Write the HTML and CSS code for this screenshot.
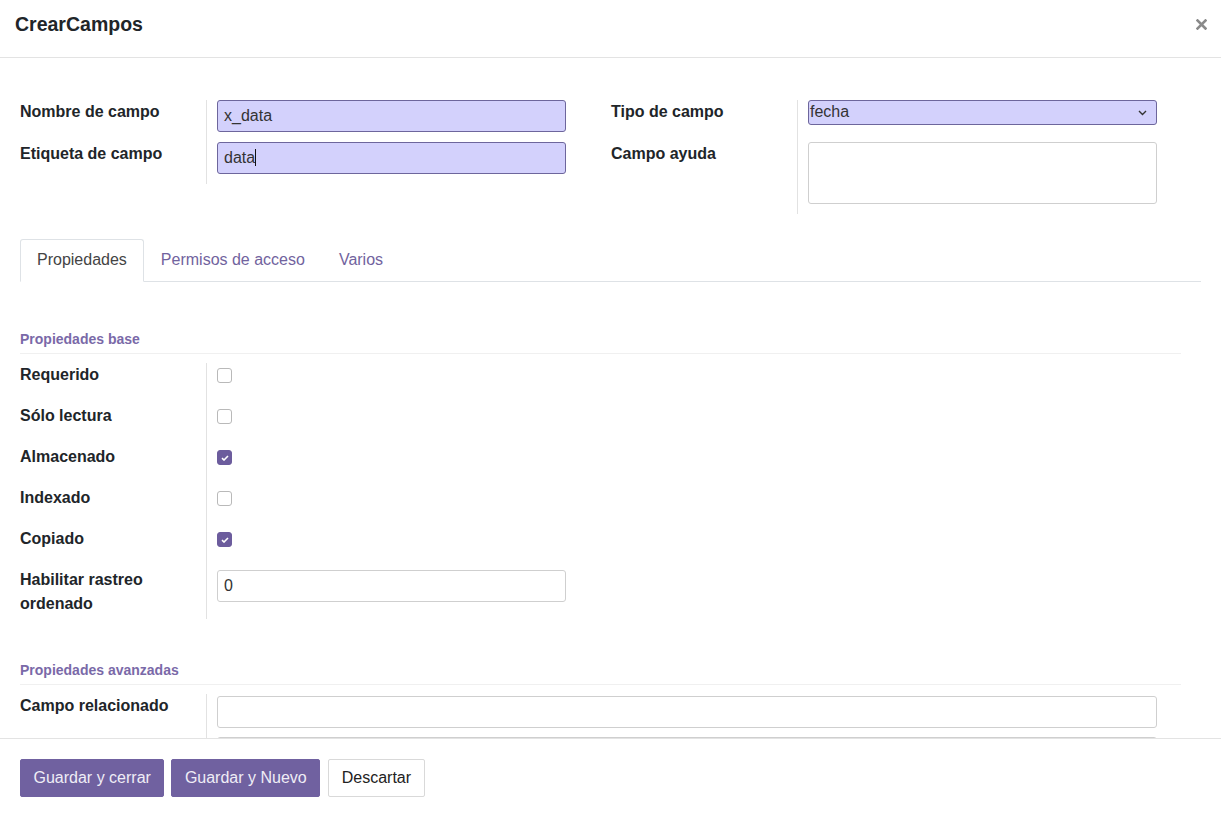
FILE: index.html
```html
<!DOCTYPE html>
<html lang="es">
<head>
<meta charset="utf-8">
<title>CrearCampos</title>
<link rel="stylesheet" href="styles.css">
</head>
<body>
<div class="modal">
  <header class="modal-header">
    <h4 class="modal-title">CrearCampos</h4>
    <button class="close" aria-label="Cerrar">
      <svg width="11" height="11" viewBox="0 0 11 11"><path d="M1.5 1.5 L9.5 9.5 M9.5 1.5 L1.5 9.5" stroke="#8a8a8a" stroke-width="2.6" stroke-linecap="square"/></svg>
    </button>
  </header>

  <main class="modal-body">
    <div class="top-groups">
      <div class="group">
        <div class="lbl">Nombre de campo</div>
        <div class="val"><div class="input hl">x_data</div></div>
        <div class="lbl">Etiqueta de campo</div>
        <div class="val"><div class="input hl">data<span class="caret"></span></div></div>
      </div>
      <div class="group">
        <div class="lbl">Tipo de campo</div>
        <div class="val"><div class="select hl"><span>fecha</span>
          <svg width="9" height="6" viewBox="0 0 9 6"><path d="M1 1 L4.5 4.5 L8 1" fill="none" stroke="#333" stroke-width="1.4"/></svg></div></div>
        <div class="lbl">Campo ayuda</div>
        <div class="val"><div class="textarea"></div></div>
      </div>
    </div>

    <nav class="tabs">
      <div class="tab active">Propiedades</div>
      <div class="tab">Permisos de acceso</div>
      <div class="tab">Varios</div>
    </nav>

    <section class="section">
      <div class="sec-title">Propiedades base</div>
      <div class="rows">
        <div class="lbl">Requerido</div>
        <div class="val"><span class="cb"></span></div>
        <div class="lbl">Sólo lectura</div>
        <div class="val"><span class="cb"></span></div>
        <div class="lbl">Almacenado</div>
        <div class="val"><span class="cb on"><svg width="8" height="6" viewBox="0 0 8 6"><path d="M1 3.2 L3 5 L7 1" fill="none" stroke="#fff" stroke-width="1.6"/></svg></span></div>
        <div class="lbl">Indexado</div>
        <div class="val"><span class="cb"></span></div>
        <div class="lbl">Copiado</div>
        <div class="val"><span class="cb on"><svg width="8" height="6" viewBox="0 0 8 6"><path d="M1 3.2 L3 5 L7 1" fill="none" stroke="#fff" stroke-width="1.6"/></svg></span></div>
        <div class="lbl">Habilitar rastreo ordenado</div>
        <div class="val"><div class="input short">0</div></div>
      </div>
    </section>

    <section class="section adv">
      <div class="sec-title">Propiedades avanzadas</div>
      <div class="rows">
        <div class="lbl">Campo relacionado</div>
        <div class="val"><div class="input wide"></div></div>
        <div class="lbl"></div>
        <div class="val"><div class="input wide"></div></div>
      </div>
    </section>
  </main>

  <footer class="modal-footer">
    <button class="btn primary">Guardar y cerrar</button>
    <button class="btn primary">Guardar y Nuevo</button>
    <button class="btn secondary">Descartar</button>
  </footer>
</div>
</body>
</html>
```
FILE: styles.css
```css
* { box-sizing: border-box; }
html, body { margin: 0; padding: 0; background: #fff; }
body {
  font-family: "Liberation Sans", Arial, sans-serif;
  font-size: 16px;
  color: #212529;
}
.modal {
  height: 100vh;
  display: flex;
  flex-direction: column;
}
.modal-header {
  height: 58px;
  flex: none;
  border-bottom: 1px solid #e3e3e3;
  display: flex;
  align-items: center;
  justify-content: space-between;
  padding: 0 15px 8px 15px;
}
.modal-title {
  margin: 0;
  font-size: 19.5px;
  font-weight: bold;
  color: #212529;
}
.close {
  border: 0;
  background: none;
  padding: 0;
  margin-right: -1px;
  display: flex;
  cursor: pointer;
}
.modal-body {
  flex: 1;
  overflow: hidden;
  padding: 42px 20px 0 20px;
}
.top-groups {
  display: grid;
  grid-template-columns: 591px 1fr;
  align-items: start;
}
.group, .rows {
  display: grid;
  grid-template-columns: 187px 1fr;
  align-content: start;
}
.group { grid-template-columns: 187px 359px; }
.lbl {
  font-weight: bold;
  line-height: 24px;
  border-right: 1px solid #e2e2e2;
  padding-right: 10px;
}
.val { padding-left: 10px; }
.group .val { padding-bottom: 10px; min-height: 42px; }
.input {
  height: 32px;
  border: 1px solid #cfcfcf;
  border-radius: 3px;
  padding: 0 6px;
  line-height: 30px;
  color: #333;
  background: #fff;
}
.hl {
  background: #d3d1fc;
  border-color: #6d669c;
}
.caret {
  display: inline-block;
  width: 1px;
  height: 17px;
  background: #111;
  vertical-align: -3px;
}
.select {
  height: 25px;
  border: 1px solid #6d669c;
  border-radius: 3px;
  padding: 0 9px 0 1px;
  line-height: 21px;
  display: flex;
  justify-content: space-between;
  align-items: center;
  color: #333;
}
.select span { align-self: flex-start; }
.textarea {
  height: 62px;
  border: 1px solid #cfcfcf;
  border-radius: 3px;
}
.tabs {
  margin-top: 25px;
  display: flex;
  border-bottom: 1px solid #dee2e6;
}
.tab {
  padding: 8px 16px 10px 16px;
  line-height: 23px;
  color: #71639e;
  border: 1px solid transparent;
  border-radius: 3px 3px 0 0;
  margin-bottom: -1px;
}
.tab.active {
  color: #444;
  border-color: #dee2e6;
  border-bottom-color: #fff;
  background: #fff;
}
.section {
  margin-right: 20px;
  margin-top: 47px;
}
.section.adv { margin-top: 41px; }
.sec-title {
  font-size: 14px;
  font-weight: bold;
  line-height: 20px;
  color: #7a69a8;
  padding-bottom: 4px;
  border-bottom: 1px solid #f0f0f0;
  margin-bottom: 9px;
}
.rows { grid-template-columns: 187px 964px; }
.rows .lbl { padding-bottom: 3px; padding-right: 30px; }
.rows .val { min-height: 41px; }
.cb {
  display: flex;
  align-items: center;
  justify-content: center;
  width: 15px;
  height: 15px;
  margin-top: 5px;
  border: 1px solid #b9b9b9;
  border-radius: 3px;
  background: #fff;
}
.cb.on {
  background: #6c5c9d;
  border-color: #6c5c9d;
}
.rows .input { margin-top: 2px; }
.short { width: 349px; }
.wide { width: 940px; }
.modal-footer {
  flex: none;
  height: 75px;
  border-top: 1px solid #e3e3e3;
  padding: 20px 20px 16px 20px;
  display: flex;
  gap: 7px;
}
.btn {
  height: 38px;
  padding: 0 12.5px;
  font-family: "Liberation Sans", Arial, sans-serif;
  font-size: 16px;
  border-radius: 2px;
  cursor: pointer;
}
.btn.primary {
  background: #7061a0;
  border: 1px solid #7061a0;
  color: #efedf6;
}
.btn.secondary {
  margin-left: 1px;
  background: #fff;
  border: 1px solid #d9d9d9;
  color: #222;
}
```
